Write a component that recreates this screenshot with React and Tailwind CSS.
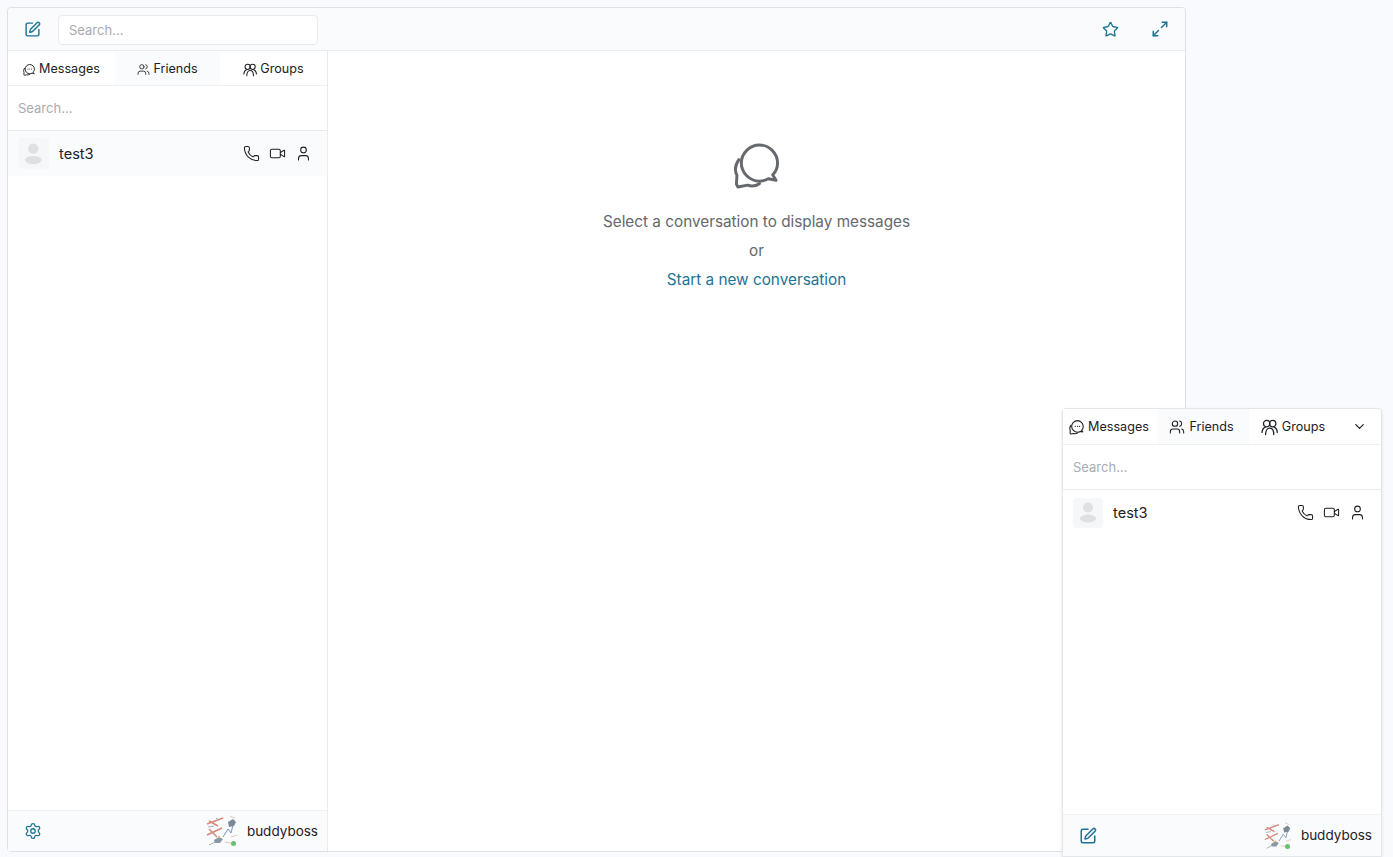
import { SquarePen, Star, Maximize2, Phone, Video, User, Settings, ChevronDown, Users } from 'lucide-react'

const TEAL = "text-[#1d7394]"

// two overlapping speech bubbles
function ChatBubbles({ size = 14, stroke = 2, dots = false, className = "" }) {
  return (
    <svg width={size} height={size} viewBox="0 0 48 48" fill="none" stroke="currentColor" strokeWidth={stroke} strokeLinecap="round" strokeLinejoin="round" className={className}>
      <path d="M40.500 32.500C43.800 29.500 45.500 25.500 45.500 20.500 45.500 10.500 37 2 27 2S8.500 10.500 8.500 20.500 17 39 27 39c3.500 0 6.500-1 9-2.500l8 1.500z" />
      <path d="M6 17C2.500 22 1.500 28 4 33l-.5 9 1.500 3 10-2c4 1.500 8 1 12-1.500" />
      {dots && <path d="M20 20.500h.01M27 20.500h.01M34 20.500h.01" />}
    </svg>
  )
}

function Groups({ size = 14, className = "" }) {
  return (
    <svg width={size} height={size} viewBox="0 0 24 24" fill="none" stroke="currentColor" strokeWidth="1.800" strokeLinecap="round" strokeLinejoin="round" className={className}>
      <circle cx="8" cy="6.500" r="4.500" />
      <circle cx="16.500" cy="6.500" r="4.500" />
      <path d="M1.500 19c0-3.500 1.500-6 4.500-7.500M23 19c0-3.500-1.500-6-4.500-7.500M6.500 22c0-5 2-9 5.750-9S18 17 18 22" />
    </svg>
  )
}

// grey placeholder person
function Placeholder({ size }) {
  return (
    <div className="flex items-center justify-center rounded bg-[#f6f7f8] shrink-0" style={{ width: size, height: size }}>
      <svg width={size * 0.6} height={size * 0.7} viewBox="0 0 18 21" fill="#dfe0e2">
        <circle cx="9" cy="5.500" r="5" />
        <ellipse cx="9" cy="16.500" rx="8" ry="4" />
      </svg>
    </div>
  )
}

// the scribbled planes avatar with its online dot
function BossAvatar({ size = 32 }) {
  return (
    <div className="relative shrink-0" style={{ width: size, height: size }}>
      <svg width={size} height={size} viewBox="0 0 32 32" fill="none">
        <path d="M1 9l16-6M3 6l9 5M1 20l15-7M3 14l8 8" stroke="#d9897a" strokeWidth="1.500" />
        <path d="M3 30l12-6M10 3l3 2M2 12l6-1" stroke="#a5aeb6" strokeWidth="1" />
        <path d="M17 22l5-8 3 4 2-8" stroke="#7f93b5" strokeWidth="1" />
        <path d="M22 7l5-3 3 3-2 4-5 1z" fill="#7d8a96" />
        <path d="M8 25l5-3 4 2-3 4-5 0z" fill="#8b98a4" />
        <circle cx="13" cy="22" r="1" fill="#d9b45f" />
        <path d="M24 1l5 2M25 22l6-2M19 27l6 1" stroke="#e6c8c2" strokeWidth="1" />
      </svg>
      <span className="absolute right-[2px] bottom-[1px] w-[5px] h-[5px] rounded-full bg-[#6cc070]" />
    </div>
  )
}

function Tabs({ big, right }) {
  const tabs = big
    ? [
        { label: "Messages", w: "w-[94px] pr-[2px]", gap: "gap-[4px]", icon: <ChatBubbles size={15} stroke={3.500} dots /> },
        { label: "Friends", w: "w-[92px] pr-[3px]", gap: "gap-[4px]", active: true, icon: <Users size={16} strokeWidth={1.600} /> },
        { label: "Groups", w: "w-[90px] pr-[2px]", gap: "gap-[4px]", icon: <Groups size={17} /> },
      ]
    : [
        { label: "Messages", w: "w-[107px]", gap: "gap-[4px]", icon: <ChatBubbles size={12} stroke={3.800} dots /> },
        { label: "Friends", w: "w-[105px]", gap: "gap-[3px]", active: true, icon: <Users size={13} strokeWidth={1.600} /> },
        { label: "Groups", w: "w-[107px]", gap: "gap-[3px]", icon: <Groups size={14} /> },
      ]
  return (
    <div className={`flex border-b border-[#eef0f2] shrink-0 ${big ? "h-[36px]" : "h-[35px]"}`}>
      {tabs.map((t) => (
        <div key={t.label} className={`flex items-center justify-center text-[12.600px] text-[#1e2125] ${big ? "pt-[1px]" : "pt-[3px]"} ${t.gap} ${t.w} ${t.active ? "bg-[#f9fbfd]" : "bg-white"}`}>
          {t.icon}
          <span>{t.label}</span>
        </div>
      ))}
      {right}
    </div>
  )
}

function ContactRow({ avatar, big }) {
  return (
    <div className={`flex items-center h-[45px] shrink-0 pl-[10px] pr-[15px] ${big ? "" : "bg-[#f9fbfd]"}`}>
      <Placeholder size={avatar} />
      <span className="ml-[10px] mt-[2px] text-[14.600px] text-[#1e2125]">test3</span>
      <div className="ml-auto flex items-center gap-[9px] text-[#1e2125]">
        <Phone size={17} strokeWidth={1.500} />
        <Video size={17} strokeWidth={1.500} />
        <User size={17} strokeWidth={1.500} />
      </div>
    </div>
  )
}

function App() {
  return (
    <div className="relative h-[857px] w-full overflow-hidden bg-[#f8fafd] p-[7px] pr-[207px] pb-[5px] font-['Inter',sans-serif]">
      {/* Main window */}
      <div className="flex flex-col h-full border border-[#dde1e6] rounded bg-white">
        <header className="flex items-center h-[43px] shrink-0 bg-[#f9fbfd] border-b border-[#e9ecef] pl-[16px] pr-[16px] rounded-t">
          <SquarePen size={17} strokeWidth={2} className={TEAL} />
          <div className="ml-[17px] mt-[2px] w-[260px] h-[30px] flex items-center bg-white border border-[#e9ebee] rounded px-[10px] pt-[1px] text-[13px] text-[#a8abb0]">Search...</div>
          <Star size={17} strokeWidth={1.900} className={`ml-auto ${TEAL}`} />
          <Maximize2 size={18} strokeWidth={1.900} className={`ml-[32px] ${TEAL}`} />
        </header>

        <div className="flex flex-1 min-h-0">
          {/* Left column */}
          <aside className="flex flex-col w-[320px] shrink-0 border-r border-[#e9ecef]">
            <Tabs />
            <div className="flex items-center h-[45px] shrink-0 px-[10px] pt-[2px] border-b border-[#e9ecef] text-[13px] text-[#a8abb0]">Search...</div>
            <ContactRow avatar={31} />
            <div className="flex-1" />
            <div className="flex items-center h-[41px] shrink-0 bg-[#f9fbfd] border-t border-[#eef0f2] pl-[16px] pr-[9px]">
              <Settings size={18} strokeWidth={1.700} className={TEAL} />
              <div className="ml-auto"><BossAvatar /></div>
              <span className="ml-[9px] text-[13.500px] text-[#1e2125]">buddyboss</span>
            </div>
          </aside>

          {/* Empty conversation */}
          <main className="flex-1 flex flex-col items-center pt-[92px] bg-white text-[15.300px] text-[#65686c]">
            <ChatBubbles size={47} stroke={3} />
            <p className="mt-[17px] leading-[29px]">Select a conversation to display messages</p>
            <p className="leading-[29px]">or</p>
            <p className="leading-[29px] text-[#1d7394]">Start a new conversation</p>
          </main>
        </div>
      </div>

      {/* Floating chat widget */}
      <div className="absolute left-[1062px] top-[408px] w-[320px] h-[449px] flex flex-col bg-white border border-[#e4e7ea] rounded-t shadow-sm">
        <Tabs big right={
          <div className="flex-1 flex items-center justify-center pr-[2px] text-[#1e2125]"><ChevronDown size={15} strokeWidth={2} /></div>
        } />
        <div className="flex items-center h-[45px] shrink-0 px-[10px] pt-[1px] border-b border-[#e9ecef] text-[13px] text-[#a8abb0]">Search...</div>
        <ContactRow big avatar={30} />
        <div className="flex-1" />
        <div className="flex items-center h-[42px] shrink-0 bg-[#f9fbfd] border-t border-[#eef0f2] pl-[16px] pr-[9px]">
          <SquarePen size={18} strokeWidth={2} className={TEAL} />
          <div className="ml-auto"><BossAvatar size={28} /></div>
          <span className="ml-[9px] text-[13.500px] text-[#1e2125]">buddyboss</span>
        </div>
      </div>
    </div>
  )
}

export default App
